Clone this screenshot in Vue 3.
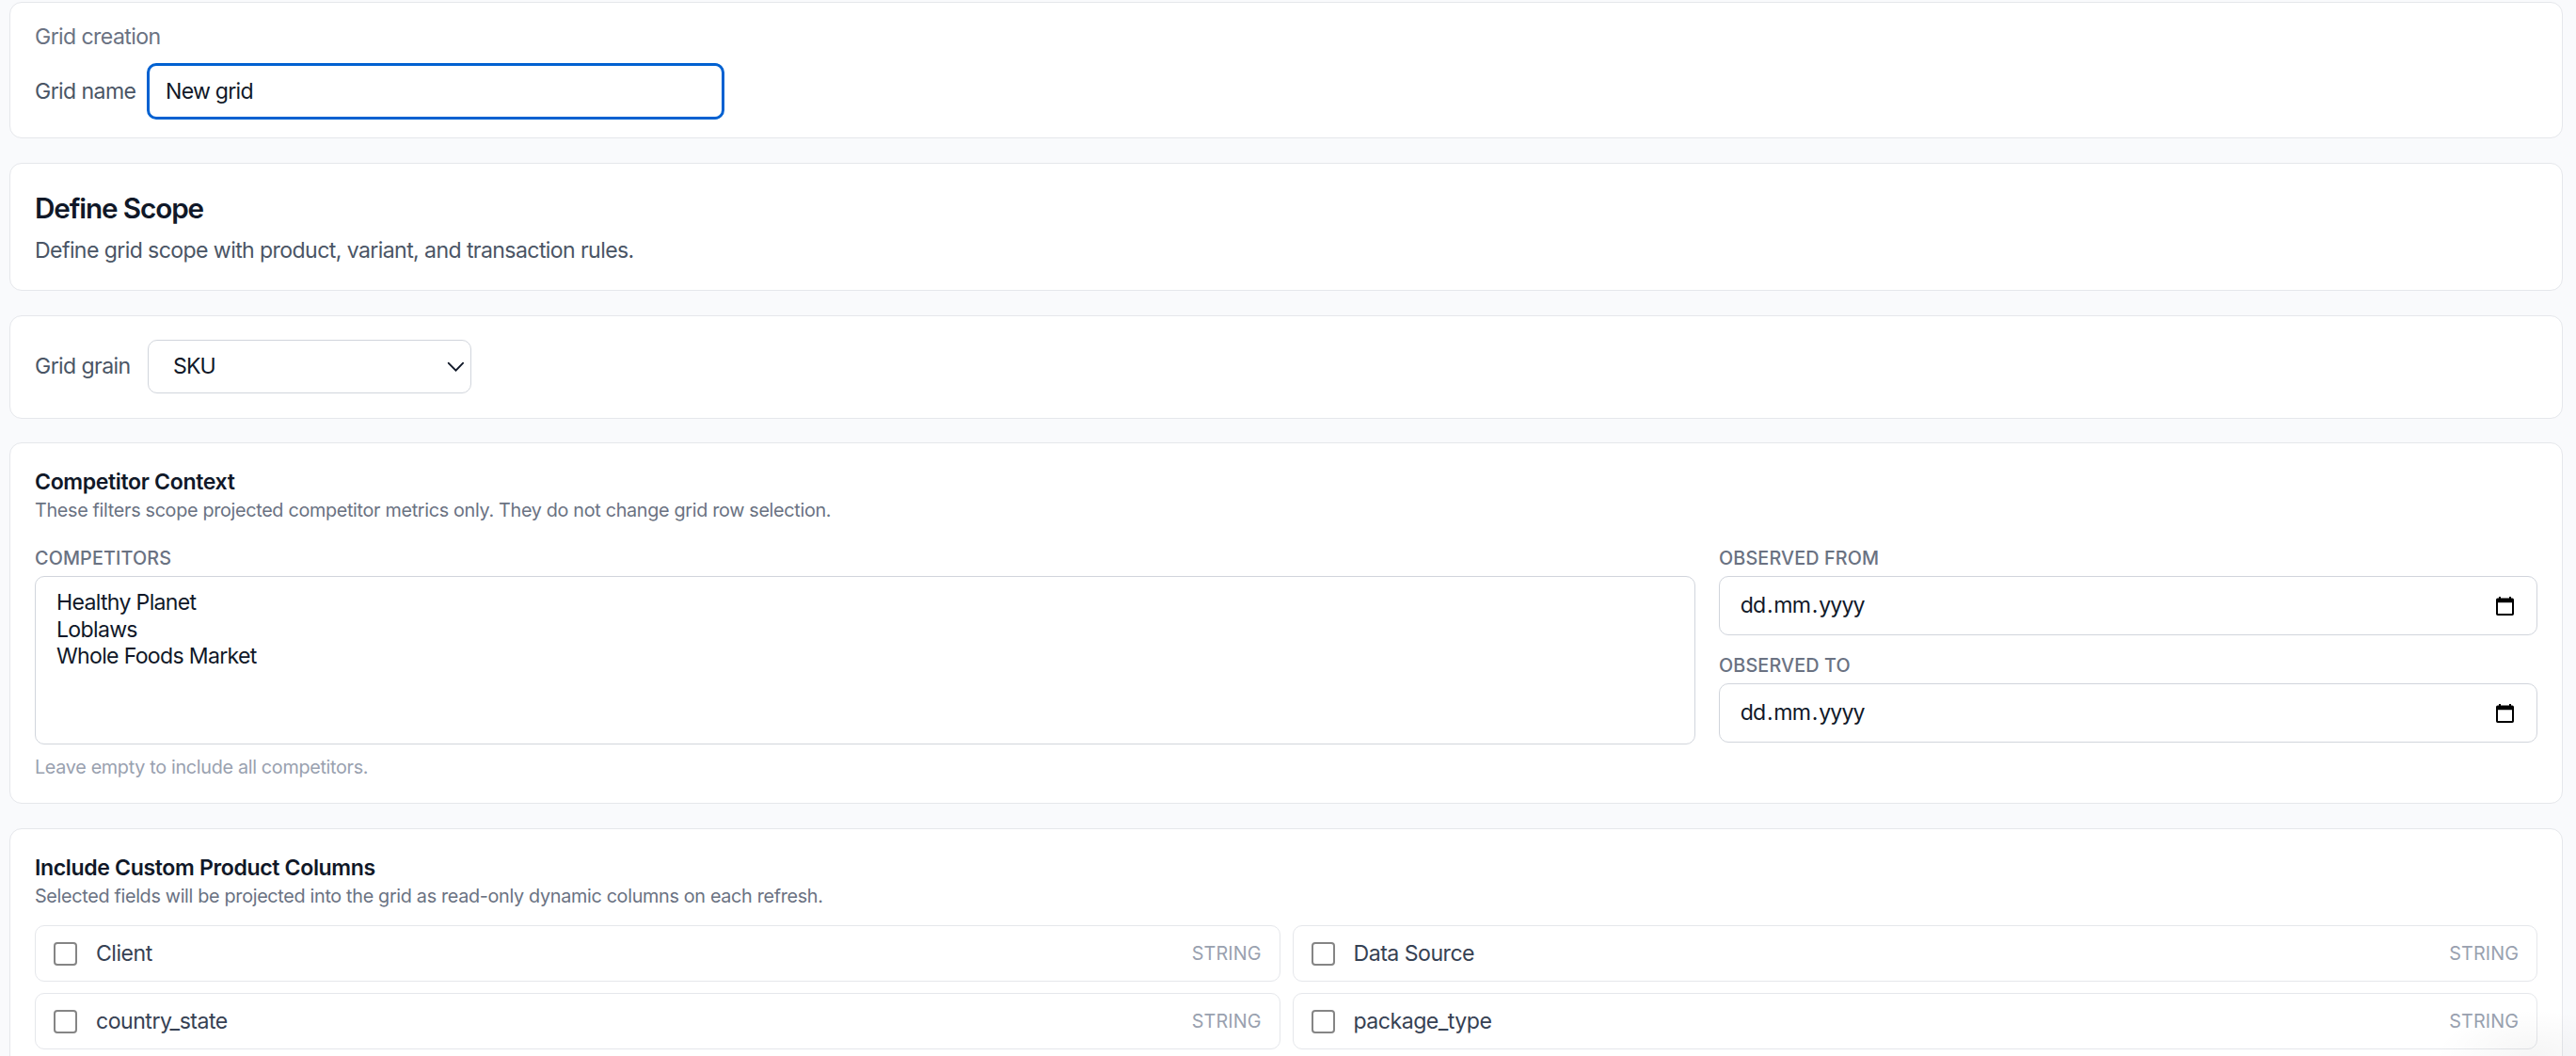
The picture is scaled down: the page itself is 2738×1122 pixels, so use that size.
<script setup>
import { ref } from 'vue'

const gridName = ref('New grid')
const grain = ref('SKU')
const competitors = ['Healthy Planet', 'Loblaws', 'Whole Foods Market']
const dateFields = [
  { id: 'from', label: 'Observed from' },
  { id: 'to', label: 'Observed to' }
]
const columns = ref([
  { name: 'Client', type: 'STRING', checked: false },
  { name: 'Data Source', type: 'STRING', checked: false },
  { name: 'country_state', type: 'STRING', checked: false },
  { name: 'package_type', type: 'STRING', checked: false }
])
</script>

<template>
  <main class="page">
    <section class="card card-name">
      <p class="text muted">Grid creation</p>
      <div class="name-row">
        <label class="text name-label" for="grid-name">Grid name</label>
        <input id="grid-name" v-model="gridName" class="name-input" type="text" />
      </div>
    </section>

    <section class="card">
      <h1 class="title">Define Scope</h1>
      <p class="text">Define grid scope with product, variant, and transaction rules.</p>
    </section>

    <section class="card grain-row">
      <span class="text grain-label">Grid grain</span>
      <button class="select" type="button">
        <span>{{ grain }}</span>
        <svg class="chevron" viewBox="0 0 18 12">
          <path d="M1.800 1.800 L9.500 9.700 L17 1.800" />
        </svg>
      </button>
    </section>

    <section class="card">
      <h2 class="subtitle">Competitor Context</h2>
      <p class="small">
        These filters scope projected competitor metrics only. They do not change grid row selection.
      </p>
      <div class="context">
        <div>
          <span class="label">Competitors</span>
          <ul class="listbox">
            <li v-for="name in competitors" :key="name">{{ name }}</li>
          </ul>
          <p class="small hint">Leave empty to include all competitors.</p>
        </div>
        <div class="dates">
          <div v-for="field in dateFields" :key="field.id">
            <span class="label">{{ field.label }}</span>
            <div class="date-input">
              <span class="date-value"
                ><span>dd</span><i>.</i><span>mm</span><i>.</i><span>yyyy</span></span
              >
              <svg class="calendar" viewBox="0 0 19 20">
                <path
                  fill-rule="evenodd"
                  d="M3 0h2v1.5h9V0h2v1.5h1.2A1.8 1.8 0 0 1 19 3.300v14.900a1.800 1.800 0 0 1-1.800 1.800H1.800A1.800 1.800 0 0 1 0 18.200V3.300A1.800 1.800 0 0 1 1.800 1.500H3z M2 6.300v11.700h15V6.300z"
                />
              </svg>
            </div>
          </div>
        </div>
      </div>
    </section>

    <section class="card">
      <h2 class="subtitle">Include Custom Product Columns</h2>
      <p class="small">
        Selected fields will be projected into the grid as read-only dynamic columns on each refresh.
      </p>
      <div class="columns">
        <label v-for="column in columns" :key="column.name" class="column">
          <input v-model="column.checked" type="checkbox" class="checkbox" />
          <span class="column-name">{{ column.name }}</span>
          <span class="column-type">{{ column.type }}</span>
        </label>
      </div>
    </section>

    <div class="corner-shade"></div>
  </main>
</template>

<style>
body {
  margin: 0;
  background: #f9fafc;
}
</style>

<style scoped>
* {
  box-sizing: border-box;
}

.page {
  position: relative;
  display: flex;
  flex-direction: column;
  gap: 26px;
  height: 1122px;
  padding: 2px 14px 0 10px;
  overflow: hidden;
  background: #f9fafc;
  color: #101828;
  font-family: Inter, 'Liberation Sans', sans-serif;
  font-size: 23.1px;
  letter-spacing: -0.6px;
  line-height: 33px;
}

p,
h1,
h2,
ul {
  margin: 0;
  padding: 0;
}

.card {
  flex-shrink: 0;
  padding: 25px 26px;
  border: 1px solid #e5e7eb;
  border-radius: 13px;
  background: #fff;
}

.card-name {
  padding: 20px 26px 19px;
}

.text {
  color: #4a5565;
  white-space: nowrap;
}

.text.muted {
  color: #6a7282;
}

.name-row {
  display: flex;
  align-items: center;
  gap: 13px;
  margin-top: 11px;
}

.name-label {
  width: 106px;
}

.name-input {
  width: 614px;
  height: 60px;
  padding: 0 17px;
  border: 3px solid #0061d1;
  border-radius: 10px;
  outline: none;
  background: #fff;
  color: #101828;
  font: inherit;
  letter-spacing: -0.75px;
}

.title {
  margin-bottom: 7px;
  font-size: 29.7px;
  font-weight: 600;
  letter-spacing: -1.12px;
  line-height: 44px;
}

.grain-row {
  display: flex;
  align-items: center;
  gap: 19px;
  margin-bottom: -1px;
  padding-bottom: 26px;
}

.grain-label {
  width: 101px;
}

.select {
  display: flex;
  align-items: center;
  justify-content: space-between;
  width: 344px;
  height: 57px;
  padding: 0 7px 0 26px;
  border: 1px solid #d1d5dc;
  border-radius: 10px;
  background: #fff;
  color: #101828;
  font: inherit;
  letter-spacing: -0.9px;
}

.chevron {
  width: 18px;
  height: 12px;
  fill: none;
  stroke: #101828;
  stroke-width: 1.9;
  stroke-linecap: round;
}

.subtitle {
  font-size: 23.1px;
  font-weight: 600;
  letter-spacing: -0.37px;
  line-height: 33px;
}

.small {
  color: #6a7282;
  font-size: 19.8px;
  letter-spacing: -0.32px;
  line-height: 26px;
}

.context {
  display: grid;
  grid-template-columns: 1765px 1fr;
  gap: 25px;
  margin-top: 25px;
}

.label {
  display: block;
  margin-bottom: 6px;
  color: #6a7282;
  font-size: 19.8px;
  font-weight: 500;
  letter-spacing: 0.13px;
  line-height: 26px;
  text-transform: uppercase;
}

.listbox {
  height: 179px;
  padding: 13px 22px;
  border: 1px solid #d1d5dc;
  border-radius: 10px;
  list-style-type: none;
  letter-spacing: -0.69px;
  line-height: 28.5px;
}

.small.hint {
  margin-top: 11px;
  color: #99a1af;
}

.dates {
  display: flex;
  flex-direction: column;
  gap: 19px;
}

.date-input {
  display: flex;
  align-items: center;
  justify-content: space-between;
  height: 63px;
  padding: 0 24px 0 20px;
  border: 1px solid #d1d5dc;
  border-radius: 10px;
  letter-spacing: -0.85px;
}

.date-value span {
  padding: 0 1.65px;
}

.date-value i {
  font-style: normal;
}

.calendar {
  width: 19px;
  height: 20px;
}

.columns {
  display: grid;
  grid-template-columns: 1fr 1fr;
  gap: 12px 13px;
  margin-top: 18px;
}

.column {
  display: flex;
  align-items: center;
  height: 60px;
  padding: 0 19px;
  border: 1px solid #e5e7eb;
  border-radius: 10px;
}

.checkbox {
  width: 25px;
  height: 25px;
  margin: 0 20px 0 0;
  border: 2px solid #858585;
  border-radius: 4px;
  appearance: none;
  background: #fff;
}

.column-name {
  flex: 1;
  color: #364153;
  letter-spacing: -0.5px;
}

.column-type {
  color: #99a1af;
  font-size: 19.8px;
  letter-spacing: 0.1px;
}

/* soft shade of the floating widget below the fold */
.corner-shade {
  position: absolute;
  right: 0;
  bottom: 0;
  width: 150px;
  height: 50px;
  background: radial-gradient(ellipse at 70% 100%, rgba(0, 0, 0, 0.04), rgba(0, 0, 0, 0) 70%);
  pointer-events: none;
}
</style>
